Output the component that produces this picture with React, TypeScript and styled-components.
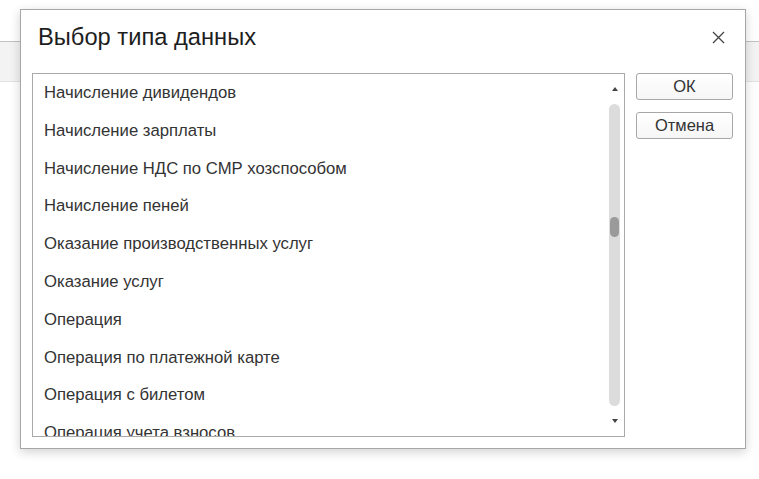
import React from "react";
import styled, { createGlobalStyle } from "styled-components";

const GlobalStyle = createGlobalStyle`
  html, body {
    margin: 0;
    padding: 0;
    background: #fff;
    font-family: "Liberation Sans", Arial, sans-serif;
  }
`;

const Page = styled.div`
  position: relative;
  width: 759px;
  height: 479px;
  overflow: hidden;
  background: #fff;
`;

const Toolbar = styled.div`
  margin-top: 41px;
  height: 39px;
  border-top: 1px solid #c2c2c2;
  border-bottom: 1px solid #e2e2e2;
  background: #f3f3f3;
`;

const Dialog = styled.div`
  position: absolute;
  left: 20px;
  top: 9px;
  width: 724px;
  height: 438px;
  border: 1px solid #a6a6a6;
  background: #fff;
  box-shadow: 0 3px 10px rgba(0, 0, 0, 0.18);
  display: flex;
  flex-direction: column;
`;

const Header = styled.div`
  height: 63px;
  display: flex;
  align-items: flex-start;
  justify-content: space-between;
  padding: 0 20px 0 17px;
`;

const Title = styled.h1`
  margin: 14px 0 0;
  font-size: 23.7px;
  font-weight: normal;
  color: #1e1e1e;
`;

const Close = styled.button`
  margin-top: 20px;
  width: 14px;
  height: 14px;
  padding: 0;
  border: none;
  background: none;
  display: flex;
  align-items: center;
  justify-content: center;
`;

const Body = styled.div`
  flex: 1;
  display: flex;
  gap: 11px;
  padding: 0 11px 11px 11px;
`;

const ListBox = styled.div`
  width: 591px;
  height: 362px;
  border: 1px solid #a9a9a9;
  display: flex;
  overflow: hidden;
`;

const Items = styled.div`
  flex: 1;
  overflow: hidden;
`;

const Item = styled.div`
  height: 37.8px;
  line-height: 37.8px;
  padding-left: 11px;
  font-size: 16.7px;
  color: #333;
  white-space: nowrap;
`;

const Scrollbar = styled.div`
  width: 11px;
  margin-right: 4px;
  padding: 13px 0;
  display: flex;
  flex-direction: column;
  align-items: center;
  gap: 13px;
`;

const Arrow = styled.div<{ $down?: boolean }>`
  width: 0;
  height: 0;
  border-left: 3.5px solid transparent;
  border-right: 3.5px solid transparent;
  ${(p) =>
    p.$down
      ? "border-top: 4px solid #444;"
      : "border-bottom: 4px solid #444;"}
`;

const Track = styled.div`
  flex: 1;
  width: 11px;
  border-radius: 6px;
  background: #dcdcdc;
  display: flex;
  justify-content: center;
`;

const Thumb = styled.div<{ $offset: number }>`
  margin-top: ${(p) => p.$offset}px;
  width: 9px;
  height: 20px;
  border-radius: 5px;
  background: #9a9a9a;
`;

const Buttons = styled.div`
  display: flex;
  flex-direction: column;
  gap: 12px;
`;

const Button = styled.button`
  width: 97px;
  height: 27px;
  border: 1px solid #a8a8a8;
  border-radius: 3px;
  background: linear-gradient(#ffffff, #f6f6f6);
  font-family: "Liberation Sans", Arial, sans-serif;
  font-size: 16.5px;
  color: #333;
  padding: 0;
`;

const items = [
  "Начисление дивидендов",
  "Начисление зарплаты",
  "Начисление НДС по СМР хозспособом",
  "Начисление пеней",
  "Оказание производственных услуг",
  "Оказание услуг",
  "Операция",
  "Операция по платежной карте",
  "Операция с билетом",
  "Операция учета взносов",
];

export default function App() {
  return (
    <Page>
      <GlobalStyle />
      <Toolbar />
      <Dialog>
        <Header>
          <Title>Выбор типа данных</Title>
          <Close aria-label="Закрыть">
            <svg width="13" height="13" viewBox="0 0 13 13">
              <path d="M1 1L12 12M12 1L1 12" stroke="#444" strokeWidth="1.3" />
            </svg>
          </Close>
        </Header>
        <Body>
          <ListBox>
            <Items>
              {items.map((t) => (
                <Item key={t}>{t}</Item>
              ))}
            </Items>
            <Scrollbar>
              <Arrow />
              <Track>
                <Thumb $offset={113} />
              </Track>
              <Arrow $down />
            </Scrollbar>
          </ListBox>
          <Buttons>
            <Button>ОК</Button>
            <Button>Отмена</Button>
          </Buttons>
        </Body>
      </Dialog>
    </Page>
  );
}
